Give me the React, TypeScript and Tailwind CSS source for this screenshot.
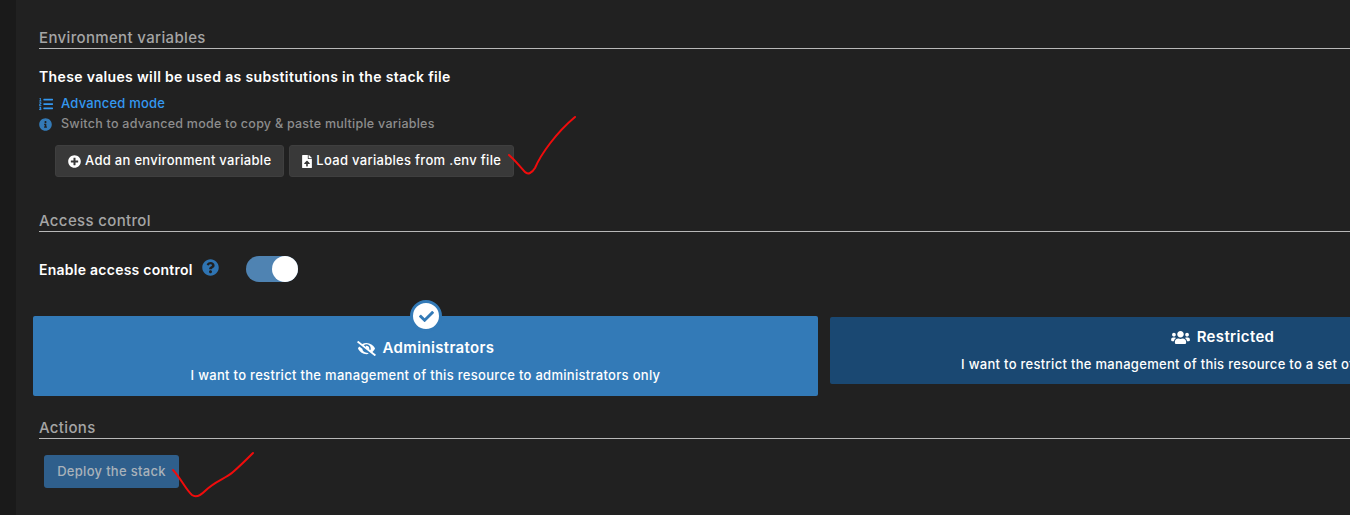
import { FaCheck, FaEyeSlash, FaFileUpload, FaInfoCircle, FaListOl, FaPlusCircle, FaQuestionCircle, FaUsers } from "react-icons/fa";

const font = { fontFamily: "Inter, 'Noto Sans', sans-serif" };

function Section({ title }: { title: string }) {
  return (
    <div className="h-[19px] border-b border-[#b8b8b8] text-[15px] leading-[16px] tracking-[0.35px] text-[#a5a5a5] font-medium">
      {title}
    </div>
  );
}

function Btn({ icon, label }: { icon: React.ReactNode; label: string }) {
  return (
    <div className="flex h-[32px] items-center gap-[4px] rounded-[3px] border border-[#3f3f3f] bg-[#393939] px-[12px] text-[13px] font-medium tracking-[0.3px] text-white">
      {icon}
      <span>{label}</span>
    </div>
  );
}

export default function App() {
  return (
    <div style={font} className="relative flex h-[515px] w-[1350px] overflow-hidden bg-[#212121]">
      <div className="h-full w-[16px] shrink-0 bg-[#1a1a1a]" />
      <div className="min-w-0 flex-1 pl-[23px] pt-[30px]">
        <Section title="Environment variables" />
        <div className="mt-[19px] text-[14px] leading-[17px] font-semibold tracking-[0.35px] text-white">
          These values will be used as substitutions in the stack file
        </div>
        <div className="mt-[11px] flex h-[16px] items-center gap-[8px] text-[13px] font-medium tracking-[0.2px] text-[#3498f0]">
          <FaListOl className="h-[14px] w-[14px]" />
          <span>Advanced mode</span>
        </div>
        <div className="mt-[4px] flex h-[16px] items-center gap-[9px] text-[12.5px] font-medium tracking-[0.25px] text-[#8d8d8d]">
          <FaInfoCircle className="h-[13px] w-[13px] text-[#337ab7]" />
          <span>Switch to advanced mode to copy &amp; paste multiple variables</span>
        </div>
        <div className="mt-[13px] ml-[16px] flex gap-[5px]">
          <Btn icon={<FaPlusCircle className="h-[13px] w-[13px]" />} label="Add an environment variable" />
          <Btn icon={<FaFileUpload className="h-[13px] w-[10px]" />} label="Load variables from .env file" />
        </div>

        <div className="mt-[36px]">
          <Section title="Access control" />
        </div>
        <div className="mt-[23px] flex h-[28px] items-center">
          <span className="text-[14px] font-semibold tracking-[0.25px] text-white">Enable access control</span>
          <FaQuestionCircle className="mb-[3px] ml-[9px] h-[17px] w-[17px] text-[#2f74b2]" />
          <div className="ml-[27px] flex h-[26px] w-[52px] items-center justify-end rounded-full bg-[#4f83b2]">
            <div className="h-[26px] w-[26px] rounded-full bg-white" />
          </div>
        </div>

        <div className="-ml-[6px] mt-[33px] flex items-start gap-[12px]">
          <div className="relative flex h-[80px] w-[785px] shrink-0 flex-col items-center rounded-[2px] bg-[#337ab7] pt-[23px] text-white">
            <div className="absolute -top-[16px] left-[377px] flex h-[32px] w-[32px] items-center justify-center rounded-full border-[3px] border-[#337ab7] bg-white">
              <FaCheck className="h-[15px] w-[15px] text-[#337ab7]" />
            </div>
            <div className="flex h-[18px] items-center gap-[7px] text-[15px] font-semibold tracking-[0.35px]">
              <FaEyeSlash className="h-[15px] w-[19px]" />
              <span>Administrators</span>
            </div>
            <div className="mt-[10px] text-[13px] font-medium leading-[16px] tracking-[0.3px]">
              I want to restrict the management of this resource to administrators only
            </div>
          </div>
          <div className="mt-[1px] flex h-[67px] w-[785px] shrink-0 flex-col items-center rounded-[2px] bg-[#1a4872] pt-[11px] text-white">
            <div className="flex h-[18px] items-center gap-[7px] text-[15px] font-semibold tracking-[0.35px]">
              <FaUsers className="h-[15px] w-[19px]" />
              <span>Restricted</span>
            </div>
            <div className="mt-[10px] whitespace-nowrap text-[13px] font-medium leading-[16px] tracking-[0.3px]">
              I want to restrict the management of this resource to a set of users and/or teams
            </div>
          </div>
        </div>

        <div className="mt-[24px]">
          <Section title="Actions" />
        </div>
        <div className="ml-[5px] mt-[16px] flex h-[33px] w-[135px] items-center justify-center rounded-[3px] bg-[#2f5f8c] text-[13px] font-medium tracking-[0.3px] text-[#a9b2ba]">
          Deploy the stack
        </div>
      </div>

      <svg className="pointer-events-none absolute left-0 top-0" width="1350" height="515" viewBox="0 0 1350 515" fill="none">
        <path d="M509 155 C515 160 521 168 525 172 C528 175 532 173 535 168 C541 154 556 133 575 117" stroke="#f00c0c" strokeWidth="2" strokeLinecap="round" />
        <path d="M173 470 C180 477 186 490 192 495 C196 498 200 496 205 491 C215 481 225 479 233 472 C240 466 247 459 253 453" stroke="#f00c0c" strokeWidth="2" strokeLinecap="round" />
      </svg>
    </div>
  );
}
